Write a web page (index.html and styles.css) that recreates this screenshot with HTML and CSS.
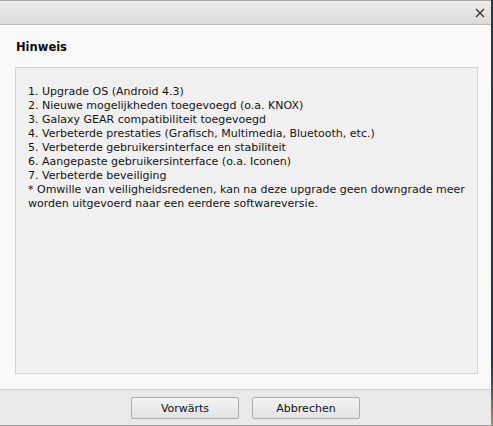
FILE: index.html
```html
<!DOCTYPE html>
<html>
<head>
<meta charset="utf-8">
<link rel="stylesheet" href="styles.css">
</head>
<body>
<div class="screen">
  <div class="window">
    <div class="titlebar">
      <button class="close" aria-label="Schließen">
        <svg width="10" height="10" viewBox="0 0 10 10"><path d="M1 1 L9 9 M9 1 L1 9" stroke="#3a3a3a" stroke-width="1.4" fill="none"/></svg>
      </button>
    </div>
    <div class="content">
      <h1 class="heading">Hinweis</h1>
      <div class="notes">
        <p>1. Upgrade OS (Android 4.3)</p>
        <p>2. Nieuwe mogelijkheden toegevoegd (o.a. KNOX)</p>
        <p>3. Galaxy GEAR compatibiliteit toegevoegd</p>
        <p>4. Verbeterde prestaties (Grafisch, Multimedia, Bluetooth, etc.)</p>
        <p>5. Verbeterde gebruikersinterface en stabiliteit</p>
        <p>6. Aangepaste gebruikersinterface (o.a. Iconen)</p>
        <p>7. Verbeterde beveiliging</p>
        <p>* Omwille van veiligheidsredenen, kan na deze upgrade geen downgrade meer worden uitgevoerd naar een eerdere softwareversie.</p>
      </div>
    </div>
    <div class="footer">
      <button class="btn">Vorwärts</button>
      <button class="btn">Abbrechen</button>
    </div>
  </div>
  <div class="edge"></div>
</div>
</body>
</html>
```

FILE: styles.css
```css
html, body {
  margin: 0;
  padding: 0;
}
body {
  font-family: "DejaVu Sans", Tahoma, sans-serif;
  font-size: 11px;
  color: #141414;
  background: #1b355f;
}
.screen {
  display: flex;
  width: 493px;
  height: 426px;
}
.window {
  width: 491px;
  height: 426px;
  display: flex;
  flex-direction: column;
  background: #f9f9f9;
}
.edge {
  width: 2px;
  height: 426px;
  background: linear-gradient(to bottom, #1a3a6a 0%, #173563 85%, #4d6a3a 92%, #c98a3c 100%);
}
.titlebar {
  height: 23px;
  border-top: 1px solid #a9a9a9;
  border-bottom: 1px solid #b9b9b9;
  background: linear-gradient(to bottom, #ededed, #dadada);
  display: flex;
  justify-content: flex-end;
  align-items: center;
  padding-right: 3px;
}
.close {
  width: 16px;
  height: 16px;
  padding: 0;
  border: none;
  background: transparent;
  display: flex;
  align-items: center;
  justify-content: center;
}
.content {
  flex: 1;
  display: flex;
  flex-direction: column;
  padding: 15px 13px 15px 15px;
}
.heading {
  margin: 0 0 13px 1px;
  font-size: 11.5px;
  font-weight: bold;
  line-height: 14px;
  color: #0a0a0a;
}
.notes {
  flex: 1;
  background: #f0f0f0;
  border: 1px solid #d3d3d3;
  padding: 17px 12px;
}
.notes p {
  margin: 0;
  line-height: 14px;
}
.footer {
  border-top: 1px solid #d4d4d4;
  border-bottom: 1px solid #9a9a9a;
  background: #e9e9ea;
  display: flex;
  justify-content: center;
  align-items: flex-start;
  gap: 13px;
  padding-top: 7px;
  box-sizing: border-box;
  height: 37px;
}
.btn {
  width: 108px;
  height: 22px;
  border: 1px solid #acacac;
  border-radius: 2px;
  background: linear-gradient(to bottom, #f3f3f3, #e3e3e3);
  font-family: "DejaVu Sans", Tahoma, sans-serif;
  font-size: 11px;
  color: #111;
  padding: 0;
}
```
